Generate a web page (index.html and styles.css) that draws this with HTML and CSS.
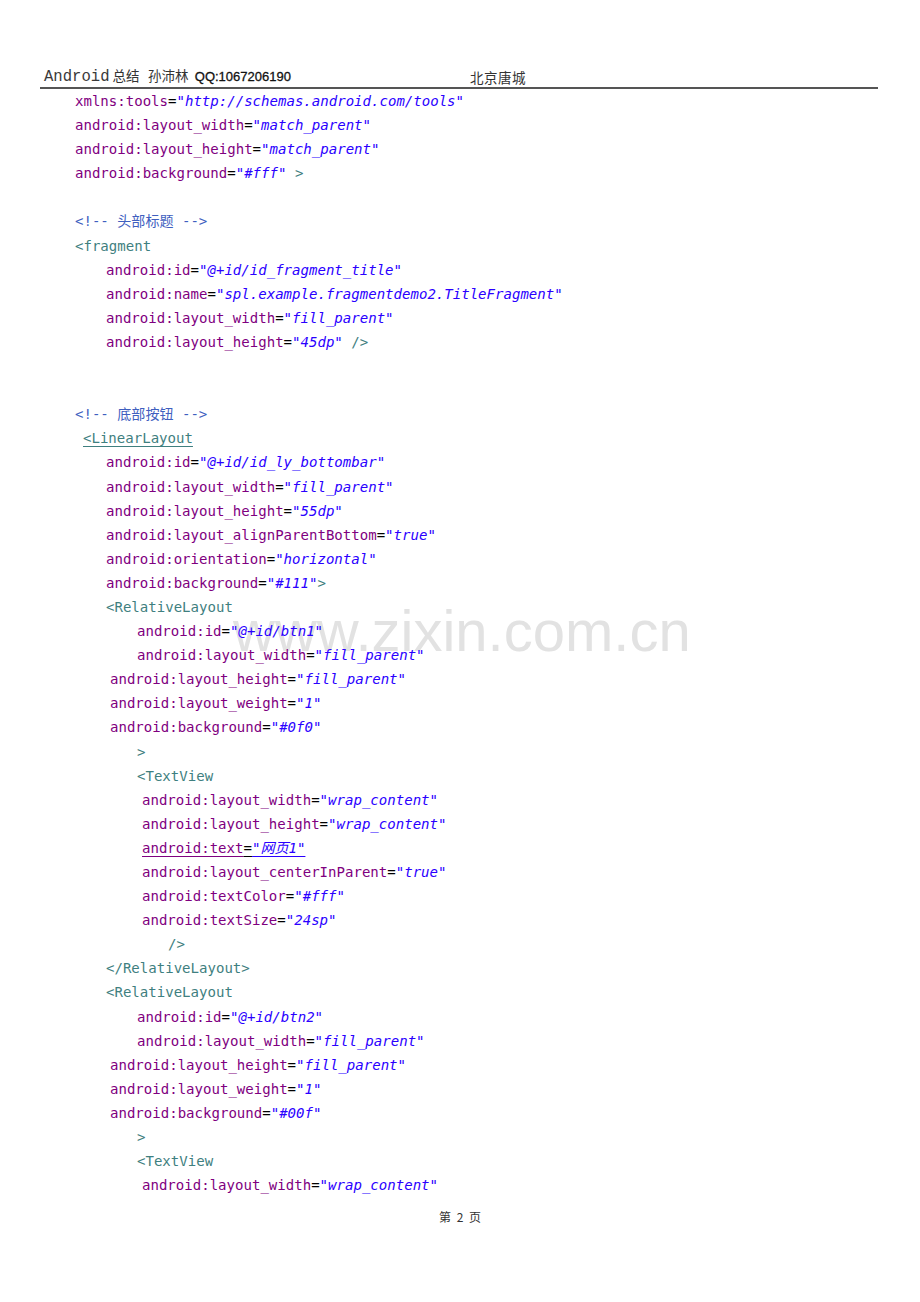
FILE: index.html
```html
<!DOCTYPE html>
<html lang="zh-CN">
<head>
<meta charset="utf-8">
<title>Android总结</title>
<link rel="stylesheet" href="styles.css">
</head>
<body>
<div class="page">
  <header class="head">
    <div class="h-left"><span class="h-latin">Android</span><span class="h-cjk">总结</span> <span class="h-cjk h-name">孙沛林</span> <span class="h-qq">QQ:1067206190</span></div>
    <div class="h-right">北京唐城</div>
  </header>

  <div class="watermark">www.zixin.com.cn</div>

  <div class="code">
    <div class="ln i1"><span class="a">xmlns:tools</span><span class="e">=</span><span class="v">"http://schemas.android.com/tools"</span></div>
    <div class="ln i1"><span class="a">android:layout_width</span><span class="e">=</span><span class="v">"match_parent"</span></div>
    <div class="ln i1"><span class="a">android:layout_height</span><span class="e">=</span><span class="v">"match_parent"</span></div>
    <div class="ln i1"><span class="a">android:background</span><span class="e">=</span><span class="v">"#fff"</span> <span class="t">&gt;</span></div>
    <div class="ln"></div>
    <div class="ln i1"><span class="c">&lt;!-- 头部标题 --&gt;</span></div>
    <div class="ln i1"><span class="t">&lt;fragment</span></div>
    <div class="ln i2"><span class="a">android:id</span><span class="e">=</span><span class="v">"@+id/id_fragment_title"</span></div>
    <div class="ln i2"><span class="a">android:name</span><span class="e">=</span><span class="v">"spl.example.fragmentdemo2.TitleFragment"</span></div>
    <div class="ln i2"><span class="a">android:layout_width</span><span class="e">=</span><span class="v">"fill_parent"</span></div>
    <div class="ln i2"><span class="a">android:layout_height</span><span class="e">=</span><span class="v">"45dp"</span> <span class="t">/&gt;</span></div>
    <div class="ln"></div>
    <div class="ln"></div>
    <div class="ln i1"><span class="c">&lt;!-- 底部按钮 --&gt;</span></div>
    <div class="ln i1b"><span class="t u">&lt;LinearLayout</span></div>
    <div class="ln i2"><span class="a">android:id</span><span class="e">=</span><span class="v">"@+id/id_ly_bottombar"</span></div>
    <div class="ln i2"><span class="a">android:layout_width</span><span class="e">=</span><span class="v">"fill_parent"</span></div>
    <div class="ln i2"><span class="a">android:layout_height</span><span class="e">=</span><span class="v">"55dp"</span></div>
    <div class="ln i2"><span class="a">android:layout_alignParentBottom</span><span class="e">=</span><span class="v">"true"</span></div>
    <div class="ln i2"><span class="a">android:orientation</span><span class="e">=</span><span class="v">"horizontal"</span></div>
    <div class="ln i2"><span class="a">android:background</span><span class="e">=</span><span class="v">"#111"</span><span class="t">&gt;</span></div>
    <div class="ln i2"><span class="t">&lt;RelativeLayout</span></div>
    <div class="ln i3"><span class="a">android:id</span><span class="e">=</span><span class="v">"@+id/btn1"</span></div>
    <div class="ln i3"><span class="a">android:layout_width</span><span class="e">=</span><span class="v">"fill_parent"</span></div>
    <div class="ln i2b"><span class="a">android:layout_height</span><span class="e">=</span><span class="v">"fill_parent"</span></div>
    <div class="ln i2b"><span class="a">android:layout_weight</span><span class="e">=</span><span class="v">"1"</span></div>
    <div class="ln i2b"><span class="a">android:background</span><span class="e">=</span><span class="v">"#0f0"</span></div>
    <div class="ln i3"><span class="t">&gt;</span></div>
    <div class="ln i3"><span class="t">&lt;TextView</span></div>
    <div class="ln i3b"><span class="a">android:layout_width</span><span class="e">=</span><span class="v">"wrap_content"</span></div>
    <div class="ln i3b"><span class="a">android:layout_height</span><span class="e">=</span><span class="v">"wrap_content"</span></div>
    <div class="ln i3b"><span class="a u">android:text</span><span class="e u">=</span><span class="v u">"网页1"</span></div>
    <div class="ln i3b"><span class="a">android:layout_centerInParent</span><span class="e">=</span><span class="v">"true"</span></div>
    <div class="ln i3b"><span class="a">android:textColor</span><span class="e">=</span><span class="v">"#fff"</span></div>
    <div class="ln i3b"><span class="a">android:textSize</span><span class="e">=</span><span class="v">"24sp"</span></div>
    <div class="ln i4"><span class="t">/&gt;</span></div>
    <div class="ln i2"><span class="t">&lt;/RelativeLayout&gt;</span></div>
    <div class="ln i2"><span class="t">&lt;RelativeLayout</span></div>
    <div class="ln i3"><span class="a">android:id</span><span class="e">=</span><span class="v">"@+id/btn2"</span></div>
    <div class="ln i3"><span class="a">android:layout_width</span><span class="e">=</span><span class="v">"fill_parent"</span></div>
    <div class="ln i2b"><span class="a">android:layout_height</span><span class="e">=</span><span class="v">"fill_parent"</span></div>
    <div class="ln i2b"><span class="a">android:layout_weight</span><span class="e">=</span><span class="v">"1"</span></div>
    <div class="ln i2b"><span class="a">android:background</span><span class="e">=</span><span class="v">"#00f"</span></div>
    <div class="ln i3"><span class="t">&gt;</span></div>
    <div class="ln i3"><span class="t">&lt;TextView</span></div>
    <div class="ln i3b"><span class="a">android:layout_width</span><span class="e">=</span><span class="v">"wrap_content"</span></div>
  </div>

  <footer class="foot">第 2 页</footer>
</div>
</body>
</html>
```

FILE: styles.css
```css
html, body {
  margin: 0;
  padding: 0;
  background: #ffffff;
}

.page {
  position: relative;
  width: 920px;
  height: 1302px;
  padding-top: 66px;
  box-sizing: border-box;
  overflow: hidden;
}

.head {
  margin-left: 40px;
  width: 838px;
  height: 23px;
  border-bottom: 2px solid #555555;
  display: flex;
  align-items: flex-end;
  padding-left: 4px;
  padding-bottom: 1px;
  box-sizing: border-box;
  font-size: 13.5px;
  line-height: 18px;
  color: #222222;
}

.h-left {
  flex: 0 0 426px;
  white-space: nowrap;
}

.h-latin {
  font-family: "Liberation Mono", monospace;
  font-size: 15.6px;
  color: #3a3a3a;
}

.h-cjk {
  font-family: "Noto Sans CJK SC", sans-serif;
  font-size: 13.5px;
  color: #333333;
  margin-left: 3px;
}

.h-name {
  margin-left: 5px;
}

.h-qq {
  font-family: "Liberation Sans", Arial, sans-serif;
  font-size: 13px;
  color: #111111;
  margin-left: 3px;
  -webkit-text-stroke: 0.3px #111111;
}

.h-right {
  font-family: "Noto Sans CJK SC", sans-serif;
  font-size: 13.5px;
  color: #333333;
  letter-spacing: 0.5px;
}

.watermark {
  position: absolute;
  left: 233px;
  top: 602px;
  font-family: "Liberation Sans", Arial, sans-serif;
  font-size: 58px;
  line-height: 58px;
  color: #e2e2e2;
  white-space: nowrap;
  z-index: 0;
}

.code {
  position: relative;
  z-index: 1;
  font-family: "DejaVu Sans Mono", "Noto Sans CJK SC", monospace;
  font-size: 14.05px;
  line-height: 24.1px;
}

.ln {
  height: 24.1px;
  white-space: pre;
}

.i1  { padding-left: 75px; }
.i1b { padding-left: 83px; }
.i2  { padding-left: 106px; }
.i2b { padding-left: 110px; }
.i3  { padding-left: 137px; }
.i3b { padding-left: 142px; }
.i4  { padding-left: 168px; }

.a { color: #7f007f; }
.e { color: #000000; }
.v { color: #2a00ff; font-style: italic; }
.t { color: #3f7f7f; }
.c { color: #3f5fbf; }

.u {
  text-decoration: underline;
  text-underline-offset: 3px;
}

.foot {
  margin-top: 12px;
  text-align: center;
  font-family: "Noto Sans CJK SC", serif;
  font-size: 12px;
  line-height: 16px;
  color: #333333;
  word-spacing: 3px;
}
```
